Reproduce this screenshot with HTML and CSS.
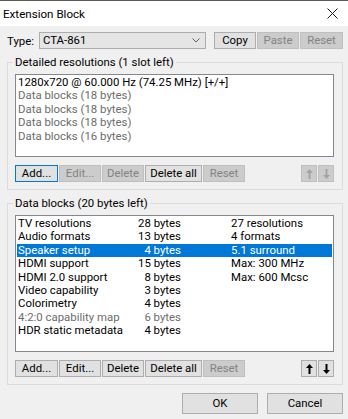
FILE: index.html
```html
<!DOCTYPE html>
<html lang="en">
<head>
  <meta charset="UTF-8">
  <title>Extension Block</title>
  <link rel="stylesheet" href="styles.css">
</head>
<body>
  <div class="window">
    <div class="titlebar">
      <span class="title">Extension Block</span>
      <svg class="close" width="11" height="11" viewBox="0 0 11 11">
        <path d="M0.5 0.5 L10.5 10.5 M10.5 0.5 L0.5 10.5" stroke="#1a1a1a" stroke-width="1" fill="none"/>
      </svg>
    </div>

    <div class="content">
      <div class="type-row">
        <span class="type-label">Type:</span>
        <div class="combo">
          <span>CTA-861</span>
          <svg class="chevron" width="8" height="5" viewBox="0 0 8 5">
            <path d="M0.5 0.5 L4 4 L7.5 0.5" stroke="#606060" stroke-width="1" fill="none"/>
          </svg>
        </div>
        <div class="btn-strip">
          <button class="btn w42">Copy</button>
          <button class="btn w42" disabled>Paste</button>
          <button class="btn w43" disabled>Reset</button>
        </div>
      </div>

      <fieldset class="group">
        <legend>Detailed resolutions (1 slot left)</legend>
        <div class="listbox list-detailed">
          <div class="row">1280x720 @ 60.000 Hz (74.25 MHz) [+/+]</div>
          <div class="row muted">Data blocks (18 bytes)</div>
          <div class="row muted">Data blocks (18 bytes)</div>
          <div class="row muted">Data blocks (18 bytes)</div>
          <div class="row muted">Data blocks (16 bytes)</div>
        </div>
        <div class="toolbar">
          <button class="btn w43 default">Add...</button>
          <button class="btn w42" disabled>Edit...</button>
          <button class="btn w42" disabled>Delete</button>
          <button class="btn w57">Delete all</button>
          <button class="btn w42" disabled>Reset</button>
          <div class="spacer"></div>
          <button class="btn arrow" disabled>
            <svg width="7" height="10" viewBox="0 0 7 10"><path d="M3.5 0 L7 4 L4.5 4 L4.5 10 L2.5 10 L2.5 4 L0 4 Z" fill="currentColor"/></svg>
          </button>
          <button class="btn arrow" disabled>
            <svg width="7" height="10" viewBox="0 0 7 10"><path d="M3.5 10 L7 6 L4.5 6 L4.5 0 L2.5 0 L2.5 6 L0 6 Z" fill="currentColor"/></svg>
          </button>
        </div>
      </fieldset>

      <fieldset class="group">
        <legend>Data blocks (20 bytes left)</legend>
        <div class="listbox list-blocks">
          <div class="row cols"><span class="c1">TV resolutions</span><span class="c2">28 bytes</span><span class="c3">27 resolutions</span></div>
          <div class="row cols"><span class="c1">Audio formats</span><span class="c2">13 bytes</span><span class="c3">4 formats</span></div>
          <div class="row cols selected"><span class="c1">Speaker setup</span><span class="c2">4 bytes</span><span class="c3">5.1 surround</span></div>
          <div class="row cols"><span class="c1">HDMI support</span><span class="c2">15 bytes</span><span class="c3">Max: 300 MHz</span></div>
          <div class="row cols"><span class="c1">HDMI 2.0 support</span><span class="c2">8 bytes</span><span class="c3">Max: 600 Mcsc</span></div>
          <div class="row cols"><span class="c1">Video capability</span><span class="c2">3 bytes</span><span class="c3"></span></div>
          <div class="row cols"><span class="c1">Colorimetry</span><span class="c2">4 bytes</span><span class="c3"></span></div>
          <div class="row cols muted"><span class="c1">4:2:0 capability map</span><span class="c2">6 bytes</span><span class="c3"></span></div>
          <div class="row cols"><span class="c1">HDR static metadata</span><span class="c2">4 bytes</span><span class="c3"></span></div>
        </div>
        <div class="toolbar">
          <button class="btn w43">Add...</button>
          <button class="btn w42">Edit...</button>
          <button class="btn w42">Delete</button>
          <button class="btn w57">Delete all</button>
          <button class="btn w42" disabled>Reset</button>
          <div class="spacer"></div>
          <button class="btn arrow">
            <svg width="7" height="10" viewBox="0 0 7 10"><path d="M3.5 0 L7 4 L4.5 4 L4.5 10 L2.5 10 L2.5 4 L0 4 Z" fill="currentColor"/></svg>
          </button>
          <button class="btn arrow">
            <svg width="7" height="10" viewBox="0 0 7 10"><path d="M3.5 10 L7 6 L4.5 6 L4.5 0 L2.5 0 L2.5 6 L0 6 Z" fill="currentColor"/></svg>
          </button>
        </div>
      </fieldset>

      <div class="dialog-buttons">
        <button class="btn big">OK</button>
        <button class="btn big">Cancel</button>
      </div>
    </div>
  </div>
</body>
</html>
```

FILE: styles.css
```css
:root {
  --face: #f0f0f0;
  --btn: #e1e1e1;
  --btn-border: #adadad;
  --off: #cccccc;
  --off-border: #bfbfbf;
  --off-text: #838383;
  --accent: #0078d7;
}

* {
  box-sizing: border-box;
}

body {
  margin: 0;
  font-family: Roboto, sans-serif;
  font-size: 11.4px;
  color: #000;
  background: var(--face);
}

.window {
  width: 348px;
  height: 419px;
  background: var(--face);
}

.titlebar {
  height: 26px;
  background: #fff;
  border-top: 1px solid #5a5a5a;
  display: flex;
  align-items: center;
  justify-content: space-between;
  padding: 0 10px 0 3px;
}

.title {
  font-size: 11.6px;
}

.close {
  display: block;
}

.content {
  padding: 0 5px 0 7px;
}

.type-row {
  margin-top: 6px;
  height: 17px;
  display: flex;
  align-items: center;
}

.type-label {
  width: 32px;
}

.combo {
  width: 167px;
  height: 17px;
  background: #e5e5e5;
  border: 1px solid var(--btn-border);
  display: flex;
  align-items: center;
  justify-content: space-between;
  padding: 0 5px 0 3px;
  line-height: 15px;
}

.chevron {
  display: block;
}

.btn-strip {
  margin-left: auto;
  display: flex;
  gap: 1px;
}

.btn {
  height: 17px;
  margin: 0;
  padding: 0;
  font: inherit;
  line-height: 15px;
  color: #000;
  background: var(--btn);
  border: 1px solid var(--btn-border);
  display: flex;
  align-items: center;
  justify-content: center;
}

.btn:disabled {
  color: var(--off-text);
  background: var(--off);
  border-color: var(--off-border);
}

.btn.default {
  border-color: var(--accent);
}

.w42 { width: 42px; }
.w43 { width: 43px; }
.w57 { width: 57px; }

.btn.arrow {
  width: 16px;
  color: #000;
}

.btn.arrow:disabled {
  color: #a3a3a3;
}

.group {
  margin: 6px 0 0;
  padding: 4px 8px 7px 7px;
  border: 1px solid #dcdcdc;
  min-width: 0;
}

.group legend {
  padding: 0 2px;
  margin-left: -2px;
  line-height: 15px;
}

.listbox {
  background: #fff;
  border: 1px solid #828790;
  padding: 1px 1px 0;
}

.list-detailed {
  height: 83px;
}

.list-blocks {
  height: 137px;
}

.row {
  height: 13.4px;
  line-height: 13.4px;
  padding-left: 1px;
  white-space: nowrap;
}

.muted {
  color: #6d6d6d;
}

.cols {
  display: flex;
}

.c1 {
  width: 103px;
}

.c2 {
  width: 60px;
  text-align: right;
}

.c3 {
  margin-left: 50px;
}

.selected {
  background: var(--accent);
  color: #fff;
}

.toolbar {
  margin-top: 8px;
  display: flex;
  gap: 1px;
}

.spacer {
  flex: 1;
}

.dialog-buttons {
  margin-top: 8px;
  display: flex;
  justify-content: flex-end;
  gap: 9px;
}

.btn.big {
  width: 76px;
  height: 21px;
}
```
